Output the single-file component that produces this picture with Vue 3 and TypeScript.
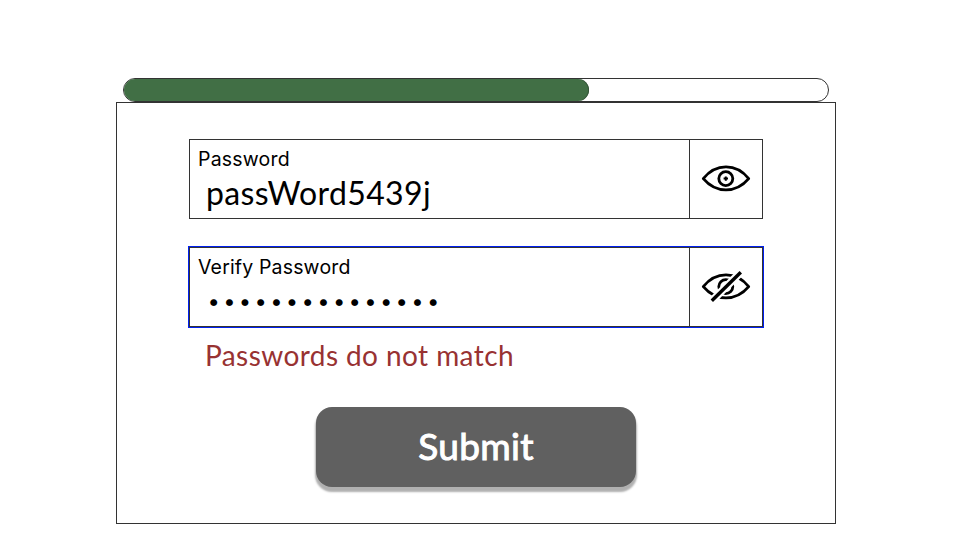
<script setup lang="ts">
import { ref } from 'vue'

const password = ref<string>('passWord5439j')
const verification = ref<string>('passWord5439jkl')
const progress = 66.1
</script>

<template>
  <main class="page">
    <div class="progress">
      <div class="progress-fill" :style="{ width: progress + '%' }"></div>
    </div>
    <form class="card" @submit.prevent>
      <div class="field">
        <label class="entry">
          <span class="label">Password</span>
          <input v-model="password" class="value" type="text" spellcheck="false" />
        </label>
        <button class="toggle" type="button">
          <svg width="50" height="28" viewBox="0 0 50 28" fill="none" stroke="#000" stroke-width="2.8">
            <path d="M2.3 13.6C15-2 35-2 47.7 13.6C35 28.6 15 28.6 2.3 13.6Z" stroke-linejoin="round" />
            <circle cx="24.8" cy="13.6" r="7" />
            <path d="M24.8 11.4v4.4M22.6 13.6h4.4" stroke-width="2" />
          </svg>
        </button>
      </div>
      <div class="field focused">
        <label class="entry">
          <span class="label verify">Verify Password</span>
          <input v-model="verification" class="value masked" type="password" />
        </label>
        <button class="toggle" type="button">
          <svg width="50" height="32" viewBox="0 0 50 32" fill="none">
            <g stroke="#000" stroke-width="2.8">
              <path d="M2.3 15.6C15 0 35 0 47.7 15.6C35 30.6 15 30.6 2.3 15.6Z" stroke-linejoin="round" />
              <circle cx="24.8" cy="15.6" r="7" />
              <path d="M24.8 13.4v4.4M22.6 15.6h4.4" stroke-width="2" />
            </g>
            <path d="M9.2 31.4L41.8 -0.8" stroke="#fff" stroke-width="7.8" />
            <path d="M10.8 29.8L39.8 1.2" stroke="#000" stroke-width="3.4" />
          </svg>
        </button>
      </div>
      <p class="error">Passwords do not match</p>
      <button class="submit" type="submit"><span>Submit</span></button>
    </form>
  </main>
</template>

<style>
body {
  background: #fff;
}
</style>

<style scoped>
* {
  box-sizing: border-box;
}
.page {
  width: 974px;
  height: 560px;
  padding: 78px 138px 0 116px;
  overflow: hidden;
  font-family: Lato, sans-serif;
}
.progress {
  width: 706px;
  height: 24px;
  margin-left: 7px;
  border: 1px solid #333;
  border-radius: 12px;
}
.progress-fill {
  height: 22px;
  background: #416f45;
  border-radius: 11px;
  box-shadow: inset -1px 0 0 #35543a;
}
.card {
  display: flex;
  flex-direction: column;
  width: 720px;
  height: 422px;
  padding: 36px 72px 0;
  border: 1px solid #333;
}
.field {
  display: flex;
  width: 574px;
  height: 80px;
  border: 1px solid #333;
}
.focused {
  margin-top: 28px;
  outline: 1px solid #0020f0;
}
.entry {
  display: flex;
  flex: 1;
  flex-direction: column;
  padding: 7px 8px 0;
}
.label {
  height: 24px;
  font: 19.5px/24px Inter, sans-serif;
  letter-spacing: 0.2px;
}
.verify {
  letter-spacing: 0.16px;
}
.value {
  width: 100%;
  height: 44px;
  padding: 0 8px;
  border: 0;
  outline: 0;
  background: transparent;
  color: #000;
  font: 32px/44px Lato, sans-serif;
  letter-spacing: 0.35px;
}
.masked {
  padding: 0 8px 0 9.5px;
  font: 22px/44px Inter, sans-serif;
  letter-spacing: 3.3px;
}
.toggle {
  display: grid;
  place-items: center;
  width: 73px;
  padding: 0;
  border: 0;
  border-left: 1px solid #333;
  background: transparent;
}
.error {
  height: 36px;
  margin: 10px 0 0 16px;
  color: #983232;
  font-size: 28px;
  line-height: 36px;
  letter-spacing: 0.42px;
}
.submit {
  width: 320px;
  height: 80px;
  margin: 34px 0 0 127px;
  padding: 0 0 2px;
  border: 0;
  border-radius: 16px;
  background: #606060;
  box-shadow: 0 4px 2px 1px #b0b0b0;
  color: #fff;
  font: 400 37px/78px Lato, sans-serif;
  letter-spacing: 0.3px;
  -webkit-text-stroke: 1px #fff;
}
</style>
